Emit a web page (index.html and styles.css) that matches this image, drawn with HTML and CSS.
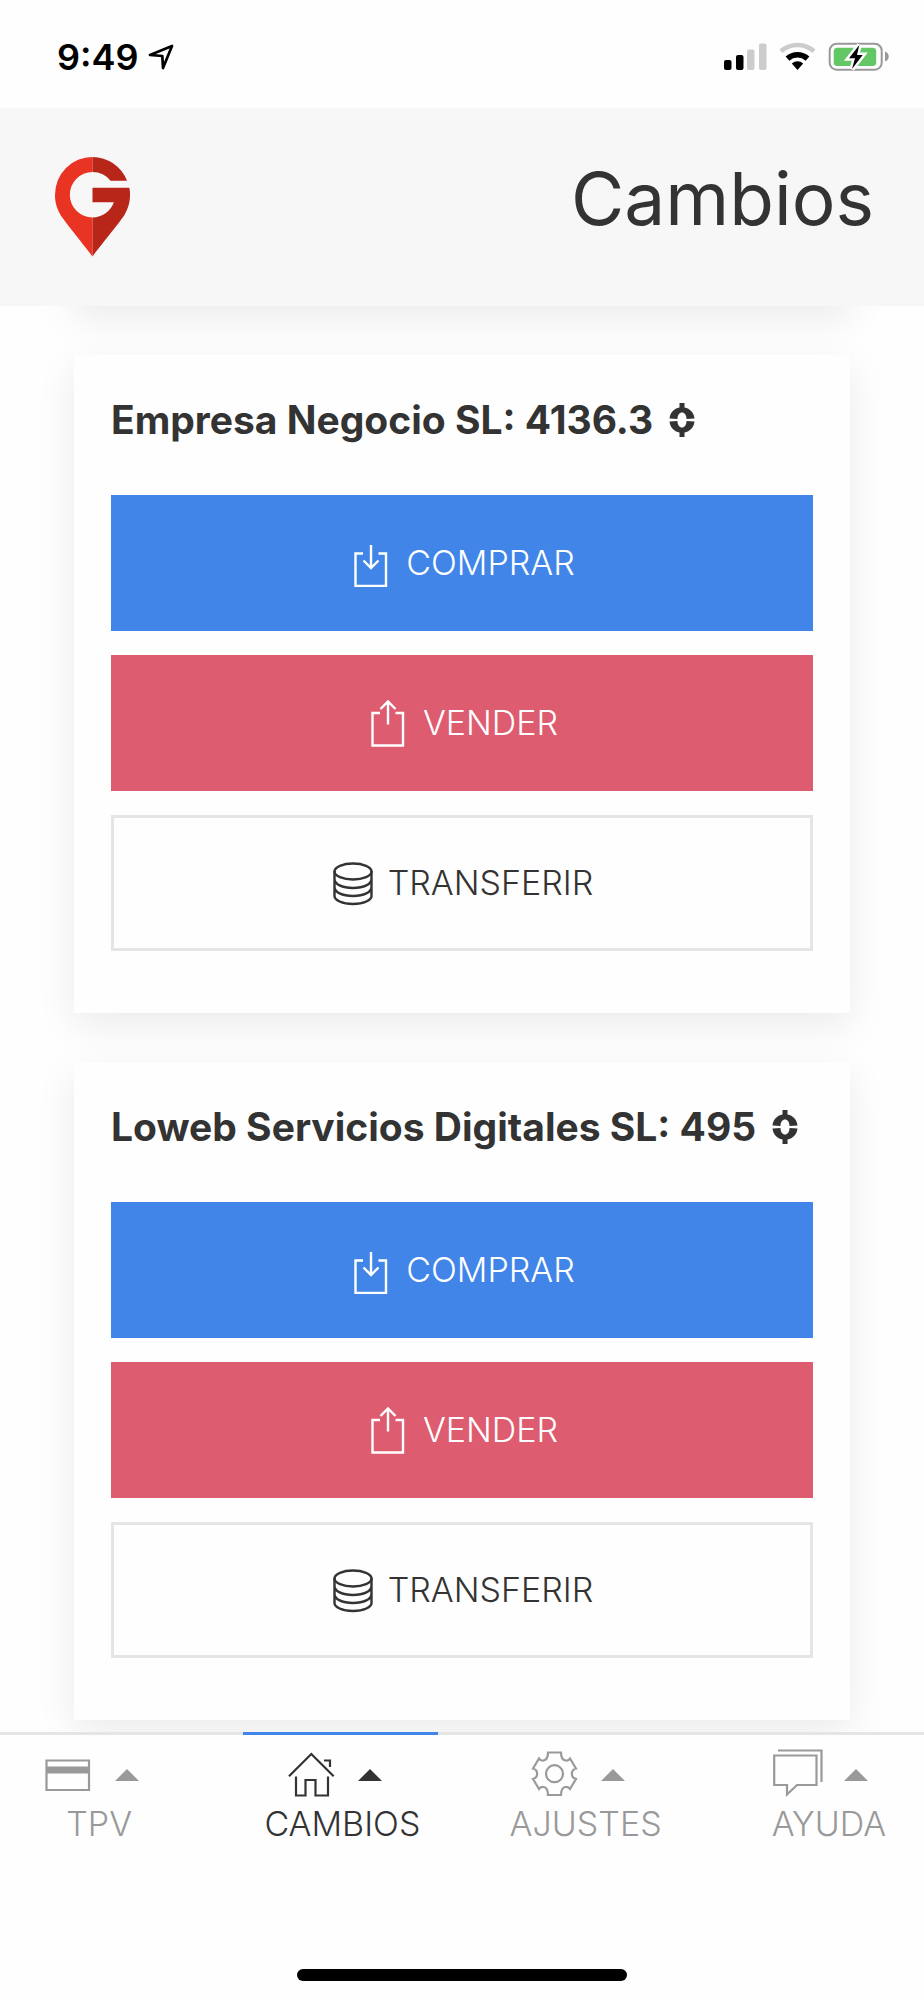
FILE: index.html
```html
<!DOCTYPE html>
<html lang="es">
<head>
  <meta charset="UTF-8">
  <meta name="viewport" content="width=device-width, initial-scale=1">
  <title>Cambios</title>
  <link rel="stylesheet" href="styles.css">
</head>
<body>
  <!-- shared icons -->
  <svg class="sprite" aria-hidden="true">
    <symbol id="icon-buy" viewBox="0 0 40 48">
      <path d="M12 14.500H4.500V47H35V14.500H27.500M20 6V29M12.500 21.500L20 29L27.500 21.500"/>
    </symbol>
    <symbol id="icon-sell" viewBox="0 0 40 48">
      <path d="M12 14H4.500V46.500H35V14H27.500M20 25.500V3M12.500 10L20 2.500L27.500 10"/>
    </symbol>
    <symbol id="icon-coins" viewBox="0 0 40 48">
      <ellipse cx="20" cy="12.500" rx="18.500" ry="8"/>
      <path d="M1.500 12V37C1.500 41 9 45 20 45S38.500 41 38.500 37V12M1.500 20C1.500 25 9 29 20 29S38.500 25 38.500 20M1.500 28C1.500 33 9 37 20 37S38.500 33 38.500 28"/>
    </symbol>
    <symbol id="icon-coin" viewBox="0 0 26 34">
      <path d="M10.500 0H15.500V4.500C21 5.500 25 10 25.500 15.500L17.500 16C17.500 12 15.500 9.500 13 9.500S8.500 12 8.500 16L.5 15.500C1 10 5 5.500 10.500 4.500Z"/>
      <path d="M10.500 34H15.500V29.500C21 28.500 25 24 25.500 18.500L17.500 18C17.500 22 15.500 24.500 13 24.500S8.500 22 8.500 18L.5 18.500C1 24 5 28.500 10.500 29.500Z"/>
    </symbol>
    <symbol id="icon-caret" viewBox="0 0 24 16">
      <path d="M12 4L24 16H0Z"/>
    </symbol>
  </svg>

  <div class="status-bar">
    <div class="status-left">
      <span>9:49</span>
      <svg width="26" height="26" viewBox="0 0 26 26" fill="none" stroke="#000" stroke-width="2.7" stroke-linejoin="round">
        <path d="M2 11L24 2L15 24L14.300 12Z"/>
      </svg>
    </div>
    <div class="status-right">
      <svg width="43" height="29" viewBox="0 0 43 29">
        <rect x="0" y="18" width="7.500" height="10" rx="2"/>
        <rect x="12" y="13" width="7.500" height="15" rx="2"/>
        <rect x="23" y="7.500" width="7.500" height="20.500" rx="2" fill="#ccc"/>
        <rect x="35" y="1.500" width="7.500" height="26.500" rx="2" fill="#ccc"/>
      </svg>
      <svg width="37" height="29" viewBox="0 0 37 29">
        <path d="M2 9.300A24.700 24.700 0 0 1 35 9.300" fill="none" stroke="#ccc" stroke-width="4.600"/>
        <path d="M8.500 16.600A15 15 0 0 1 28.500 16.600" fill="none" stroke="#000" stroke-width="5.600"/>
        <path d="M18.500 28L12.800 21.400A8.500 8.500 0 0 1 24.200 21.400Z"/>
      </svg>
      <svg width="61" height="30" viewBox="0 0 61 30">
        <rect x="1.700" y="1.700" width="52" height="26" rx="7" fill="none" stroke="#999" stroke-width="2"/>
        <rect x="5.700" y="5.700" width="42.500" height="18.300" rx="3.500" fill="#64c766"/>
        <path d="M57 9.500C59.500 10.500 60.700 12 60.700 14.500S59.500 18.500 57 19.500Z" fill="#999"/>
        <path d="M31.300 3L21 16.300H27L24 27L34.700 13H29Z" stroke="#fff" stroke-width="5"/>
        <path d="M31.300 3L21 16.300H27L24 27L34.700 13H29Z"/>
      </svg>
    </div>
  </div>

  <header class="header">
    <svg class="logo" viewBox="0 0 75 100" role="img" aria-label="G">
      <path d="M37.500 0A37.500 37.700 0 0 0 0 37.700C0 46 2 51 5 57C9 64 26 84 37.500 99.500V60.400A22.700 22.700 0 0 1 37.500 15Z" fill="#e93323"/>
      <path d="M37.500 0A37.500 37.500 0 0 1 72 23.700H55.500A22.700 22.700 0 0 0 37.500 15ZM37.500 30.700H74.300C75 34 75 36 75 37.700C75 46 73 51 70 57C66 64 49 84 37.500 99.500V60.400A22.700 22.700 0 0 0 58.900 45.300H37.500Z" fill="#b82519"/>
    </svg>
    <h1>Cambios</h1>
  </header>

  <main class="content">
    <!-- tail of the card scrolled under the header -->
    <section class="card card-scrolled"></section>

    <section class="card">
      <h2>Empresa Negocio SL: 4136.3 <svg class="coin"><use href="#icon-coin"/></svg></h2>
      <div class="actions">
        <button type="button" class="btn btn-buy"><svg class="icon"><use href="#icon-buy"/></svg><span>COMPRAR</span></button>
        <button type="button" class="btn btn-sell"><svg class="icon"><use href="#icon-sell"/></svg><span>VENDER</span></button>
        <button type="button" class="btn btn-transfer"><svg class="icon"><use href="#icon-coins"/></svg><span>TRANSFERIR</span></button>
      </div>
    </section>

    <section class="card">
      <h2>Loweb Servicios Digitales SL: 495 <svg class="coin"><use href="#icon-coin"/></svg></h2>
      <div class="actions">
        <button type="button" class="btn btn-buy"><svg class="icon"><use href="#icon-buy"/></svg><span>COMPRAR</span></button>
        <button type="button" class="btn btn-sell"><svg class="icon"><use href="#icon-sell"/></svg><span>VENDER</span></button>
        <button type="button" class="btn btn-transfer"><svg class="icon"><use href="#icon-coins"/></svg><span>TRANSFERIR</span></button>
      </div>
    </section>
  </main>

  <footer class="footer">
    <nav class="tabs">
      <a href="#tpv" class="tab">
        <span class="tab-icons">
          <svg class="tab-icon" viewBox="0 0 50 50"><path d="M2.500 12.500H45V42H2.500Z"/><path d="M2.500 22H45" stroke-width="7"/></svg>
          <svg class="caret"><use href="#icon-caret"/></svg>
        </span>
        <span class="tab-label">TPV</span>
      </a>
      <a href="#cambios" class="tab active">
        <span class="tab-icons">
          <svg class="tab-icon" viewBox="0 0 50 50"><path d="M2 28.300L24.300 6L46.700 28.300M37 12.500H43V19M9 28.500V47.500H18.500V32H28.500V47.500H41V28.500"/></svg>
          <svg class="caret"><use href="#icon-caret"/></svg>
        </span>
        <span class="tab-label">CAMBIOS</span>
      </a>
      <a href="#ajustes" class="tab">
        <span class="tab-icons">
          <svg class="tab-icon" viewBox="0 0 50 50"><path d="M18 4.500H31C31 9 32 12 35.500 12.500C38 13 39 12 40 10.500L46 20.500C40.500 22 40.500 29.500 46 31L40 41C39 39.500 38 38.500 35.500 39C32 39.500 31 42.500 31 47H18C18 42.500 17 39.500 13.500 39C11 38.500 10 39.500 9 41L3 31C8.500 29.500 8.500 22 3 20.500L9 10.500C10 12 11 13 13.500 12.500C17 12 18 9 18 4.500Z"/><circle cx="24.500" cy="25.700" r="8.500"/></svg>
          <svg class="caret"><use href="#icon-caret"/></svg>
        </span>
        <span class="tab-label">AJUSTES</span>
      </a>
      <a href="#ayuda" class="tab">
        <span class="tab-icons">
          <svg class="tab-icon" viewBox="0 0 50 50"><path d="M1.200 7.500H43.500V37H24L14 46.500V37H1.200ZM5 2.500H48.500V34"/></svg>
          <svg class="caret"><use href="#icon-caret"/></svg>
        </span>
        <span class="tab-label">AYUDA</span>
      </a>
    </nav>
    <div class="home-indicator"></div>
  </footer>
</body>
</html>
```
FILE: styles.css
```css
* {
  margin: 0;
  padding: 0;
  box-sizing: border-box;
}

body {
  height: 100vh;
  display: flex;
  flex-direction: column;
  background: #fefefe;
  color: #333;
  font-family: Inter, "Liberation Sans", sans-serif;
  overflow: hidden;
}

svg {
  flex: none;
}

.sprite {
  position: absolute;
  width: 0;
  height: 0;
}

/* status bar */
.status-bar {
  height: 108px;
  padding: 5px 35px 0 57px;
  display: flex;
  align-items: center;
  justify-content: space-between;
  color: #000;
  font-size: 36px;
  font-weight: 600;
}

.status-left,
.status-right {
  display: flex;
  align-items: center;
}

.status-left {
  gap: 9px;
}

.status-right {
  gap: 12px;
}

/* header */
.header {
  padding: 49px 50px 49px 55px;
  display: flex;
  align-items: center;
  justify-content: space-between;
  background: #f7f7f7;
}

.logo {
  width: 75px;
  height: 100px;
}

.header h1 {
  padding-bottom: 16px;
  font-size: 73px;
  font-weight: 400;
  line-height: 84px;
}

/* cards */
.content {
  flex: 1;
  min-height: 0;
  padding: 0 74px;
  display: flex;
  flex-direction: column;
  gap: 49px;
  overflow: hidden;
}

.card {
  flex: none;
  padding: 36px 37px 62px;
  background: #fefefe;
  box-shadow: 0 12px 37px rgba(0, 0, 0, 0.08);
}

.card-scrolled {
  height: 200px;
  margin-top: -200px;
}

.card h2 {
  display: flex;
  align-items: center;
  gap: 16px;
  margin-bottom: 46px;
  font-size: 39px;
  font-weight: 700;
  line-height: 58px;
}

.coin {
  width: 26px;
  height: 34px;
  fill: currentColor;
}

.actions {
  display: flex;
  flex-direction: column;
  gap: 24px;
}

.btn {
  height: 136px;
  padding-left: 2px;
  display: flex;
  align-items: center;
  justify-content: center;
  gap: 15px;
  border: none;
  color: #fff;
  font-family: inherit;
  font-size: 34px;
  font-weight: 300;
  cursor: pointer;
}

.btn span {
  padding-bottom: 2px;
}

.btn-buy {
  background: #4185e8;
}

.btn-sell {
  background: #dd5c70;
}

.btn-transfer {
  background: #fefefe;
  border: 3px solid #e5e5e5;
  color: #333;
}

.icon {
  width: 40px;
  height: 48px;
  fill: none;
  stroke: currentColor;
  stroke-width: 2.4;
}

/* bottom tabs */
.footer {
  padding-bottom: 19px;
  border-top: 3px solid #e5e5e5;
  background: #fefefe;
}

.tabs {
  display: grid;
  grid-template-columns: repeat(4, 1fr);
  column-gap: 49px;
  margin-top: -3px;
}

.tab {
  padding-top: 13px;
  border-top: 3px solid transparent;
  display: flex;
  flex-direction: column;
  align-items: center;
  gap: 6px;
  color: #999;
  text-decoration: none;
}

.tab.active {
  border-top-color: #4185e8;
  color: #333;
}

.tab-icons {
  display: flex;
  align-items: center;
  gap: 21px;
  padding-right: 12px;
}

.tab-icon {
  width: 50px;
  height: 50px;
  fill: none;
  stroke: currentColor;
  stroke-width: 2.2;
}

.caret {
  width: 24px;
  height: 16px;
  fill: currentColor;
}

.tab-label {
  padding-left: 4px;
  font-size: 34px;
  font-weight: 300;
  line-height: 40px;
}

.home-indicator {
  width: 330px;
  height: 12px;
  margin: 125px auto 0;
  border-radius: 6px;
  background: #000;
}
```
